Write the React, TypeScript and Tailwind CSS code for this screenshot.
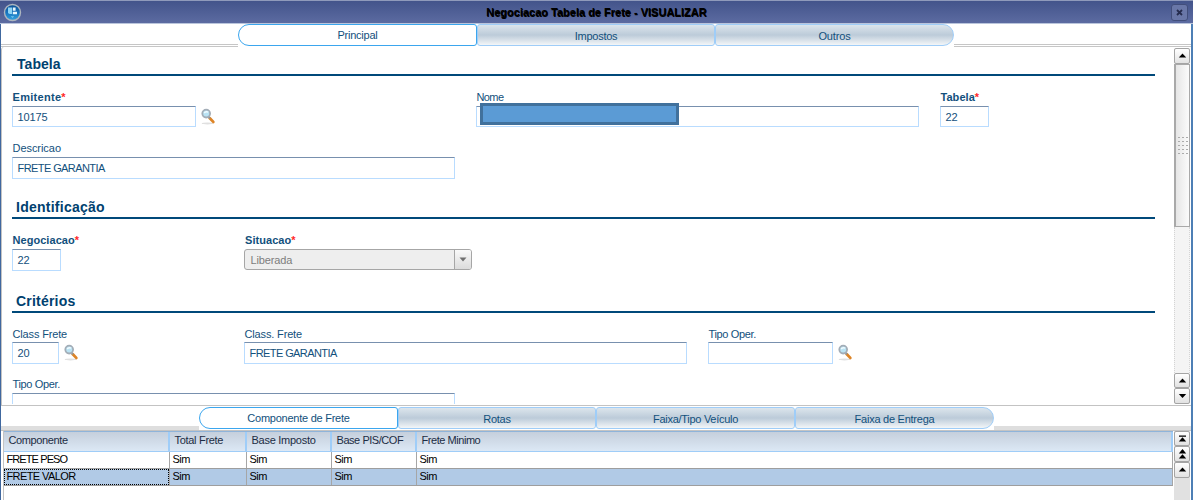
import React from "react";

type TextProps = { text: string; track?: string };

function Lens() {
  return (
    <svg width="16" height="18" viewBox="0 0 16 18" className="shrink-0">
      <ellipse cx="6.5" cy="15.4" rx="5.8" ry="1" fill="#e0e0e0" />
      <path d="M8.6 10 L12.3 13.9" stroke="#dd8426" strokeWidth="2.8" strokeLinecap="round" />
      <path d="M7.4 8.6 L9 10.3" stroke="#8d969e" strokeWidth="1.8" />
      <circle cx="5.2" cy="5.6" r="3.9" fill="#b9e2f3" stroke="#a3adb7" strokeWidth="1.8" />
      <path d="M3.2 5 Q4.7 2.8 7.2 4.2" stroke="#f2fbff" strokeWidth="1.4" fill="none" />
    </svg>
  );
}

function Field({
  label,
  bold,
  value,
  width,
  col,
  height = "h-[22px]",
  labelTrack = "tracking-normal",
  labelLine = "leading-[14px]",
  valueTrack = "tracking-[-0.1px]",
  lens,
}: {
  label: string;
  bold?: boolean;
  value?: string;
  width: string;
  col: string;
  height?: string;
  labelTrack?: string;
  labelLine?: string;
  valueTrack?: string;
  lens?: boolean;
}) {
  return (
    <div className={`${col} flex flex-col`}>
      <div className={`h-[16px] pl-[0.5px] whitespace-nowrap ${labelLine} ${labelTrack} ${bold ? "font-bold" : ""}`}>
        {label}
        {bold && <span className="text-[#ff2a2a]">*</span>}
      </div>
      <div className="flex">
        <div
          className={`${width} ${height} ${valueTrack} border border-[#b9dcff] border-t-[#7890ae] bg-white pl-[4.5px] leading-[20px] whitespace-nowrap`}
        >
          {value}
        </div>
        {lens && (
          <div className="ml-[5px] h-[20px] pt-[2px]">
            <Lens />
          </div>
        )}
      </div>
    </div>
  );
}

function Heading({ text, track, height, indent = "pl-[4px]" }: TextProps & { height: string; indent?: string }) {
  return (
    <div className={`${height} flex w-[1143px] items-end border-b-2 border-[#00497a]`}>
      <h2 className={`pb-[1px] ${indent} text-[14px] leading-[18px] font-bold text-[#00416f] ${track}`}>{text}</h2>
    </div>
  );
}

function Tab({
  text,
  track,
  width,
  active,
  last,
}: TextProps & { width: string; active?: boolean; last?: boolean }) {
  return (
    <div
      className={`${width} ${track} flex h-[22px] items-center justify-center border ${
        active
          ? "rounded-l-[11px] rounded-r-[3px] border-[#3ba6ee] bg-white"
          : `border-[#9fcdf8] bg-linear-to-b from-[#dce5ec] via-[#bccbd9] to-[#f3f6f8] ${
              last ? "rounded-l-[3px] rounded-r-[11px]" : "rounded-[3px]"
            }`
      }`}
    >
      <span className={active ? "pt-[1px]" : "pt-[3px]"}>{text}</span>
    </div>
  );
}

function ArrowButton({ kind, height }: { kind: "up" | "down" | "top" | "page"; height: string }) {
  return (
    <div
      className={`${height} flex w-[16px] shrink-0 items-center justify-center rounded-[2px] border border-[#a4a4a4] bg-linear-to-b from-white to-[#e2e2e2]`}
    >
      <svg width="9" height="10" viewBox="0 0 9 10" fill="#000">
        {kind === "up" && <path d="M4.5 2.5 L8.2 6.5 H0.8 Z" />}
        {kind === "down" && <path d="M4.5 7 L8.2 3 H0.8 Z" />}
        {kind === "top" && <path d="M1 1.5 H8 V2.7 H1 Z M4.5 3.3 L8.2 7.5 H0.8 Z" />}
        {kind === "page" && <path d="M4.5 0 L8.2 4.4 H0.8 Z M4.5 5.2 L8.2 9.6 H0.8 Z" />}
      </svg>
    </div>
  );
}

const columns = [
  { text: "Componente", track: "tracking-[-0.38px]", width: "w-[166px]" },
  { text: "Total Frete", track: "tracking-[-0.3px]", width: "w-[77px]" },
  { text: "Base Imposto", track: "tracking-[-0.27px]", width: "w-[85px]" },
  { text: "Base PIS/COF", track: "tracking-[-0.45px]", width: "w-[85px]" },
  { text: "Frete Minimo", track: "tracking-[-0.45px]", width: "flex-1" },
];

function Row({ name, track, selected }: { name: string; track: string; selected?: boolean }) {
  return (
    <div className={`flex h-[17px] leading-[15px] border-b border-[#9e9e9e] ${selected ? "bg-[#b1cae6]" : "bg-white"}`}>
      {columns.map((c, i) => (
        <div key={c.text} className={`${c.width} flex border-r border-[#a6a6a6]`}>
          {i === 0 ? (
            <div
              className={`flex-1 pl-[2.5px] whitespace-nowrap ${track} ${
                selected ? "outline-1 -outline-offset-1 outline-dotted outline-black" : ""
              }`}
            >
              {name}
            </div>
          ) : (
            <div className="pl-[2.5px] tracking-[-0.5px]">Sim</div>
          )}
        </div>
      ))}
    </div>
  );
}

export default function App() {
  return (
    <div className="flex h-[500px] w-[1193px] flex-col overflow-hidden bg-white font-['Liberation_Sans',Arial,sans-serif] text-[11px] text-[#12507c]">
      <header className="flex h-[24px] shrink-0 items-center border-t border-b border-t-[#8f9abb] border-b-[#bac5dc] bg-linear-to-b from-[#43548b] to-[#5c6ba1] pr-[5px] pl-[3px]">
        <svg width="19" height="19" viewBox="0 0 19 19">
          <defs>
            <linearGradient id="orb" x1="0" y1="0" x2="0" y2="1">
              <stop offset="0" stopColor="#0d4f93" />
              <stop offset="0.5" stopColor="#1673bd" />
              <stop offset="1" stopColor="#35a5e2" />
            </linearGradient>
          </defs>
          <circle cx="9.5" cy="9.5" r="8" fill="url(#orb)" stroke="#adb5bf" strokeWidth="1.4" />
          <path d="M5 4.6 H9 V11 H6.8 Q5 11 5 9.2 Z" fill="#8ed4f5" />
          <path d="M9.8 4.6 H12.6 V7.8 H9.8 Z M9.8 8.7 H14 V11.2 H9.8 Z" fill="#e5f6fd" />
          <path d="M7.8 13.2 H11.2 L9.5 15 Z" fill="#76c9ef" />
        </svg>
        <h1 className="flex-1 text-center text-[11px] leading-[20px] font-bold text-black [text-shadow:0.5px_0.5px_0_#000]">
          Negociacao Tabela de Frete - VISUALIZAR
        </h1>
        <div className="flex h-[17px] w-[17px] items-center justify-center rounded-[3px] border border-[#414e7b] bg-[#6977a8]">
          <svg width="7" height="7" viewBox="0 0 7 7">
            <path d="M1 1 L6 6 M6 1 L1 6" stroke="#252c4e" strokeWidth="1.8" />
          </svg>
        </div>
      </header>

      <div className="flex min-h-0 flex-1 flex-col border-r-2 border-l border-r-[#4d7fb5] border-l-[#40689f]">
        <nav className="flex h-[23px] shrink-0">
          <div className="h-[23px] flex-1 border-b border-[#c6c6c6]">
            <div className="h-[21px] border-b border-[#c6c6c6]" />
          </div>
          <Tab text="Principal" track="tracking-[-0.25px]" width="w-[239px]" active />
          <Tab text="Impostos" track="tracking-[-0.25px]" width="w-[238px]" />
          <Tab text="Outros" track="tracking-[-0.15px]" width="w-[239px]" last />
          <div className="h-[23px] flex-1 border-b border-[#c6c6c6]">
            <div className="h-[21px] border-b border-[#c6c6c6]" />
          </div>
        </nav>

        <section className="flex h-[359px] shrink-0 rounded-tl-[3px] border-b border-l border-[#c3c3c3]">
          <div className="h-[357px] min-w-0 flex-1 overflow-hidden pl-[10px]">
            <Heading text="Tabela" track="tracking-[0.05px]" height="h-[29px]" indent="pl-[5px]" />
            <div className="mt-[14px] grid grid-cols-[repeat(5,232px)]">
              <Field label="Emitente" bold value="10175" width="w-[184px]" col="col-start-1" height="h-[21px]" labelTrack="tracking-[0.3px]" lens />
              <div className="relative col-start-3 col-span-2">
                <Field label="Nome" width="w-[443px]" col="" height="h-[21px]" labelTrack="tracking-[-0.6px]" />
                <div className="absolute top-[13px] left-[4px] h-[22px] w-[199px] border-[3px] border-[#41719c] bg-[#5b9bd5]" />
              </div>
              <Field label="Tabela" bold value="22" width="w-[49px]" col="col-start-5" height="h-[21px]" labelTrack="tracking-[0.05px]" />
            </div>
            <div className="mt-[14px] grid grid-cols-[repeat(5,232px)]">
              <Field label="Descricao" value="FRETE GARANTIA" width="w-[443px]" col="col-span-2" labelTrack="tracking-[-0.05px]" valueTrack="tracking-[-0.58px]" />
            </div>

            <Heading text="Identificação" track="tracking-[0.25px]" height="h-[40px]" />
            <div className="mt-[14px] grid grid-cols-[repeat(5,232px)]">
              <Field label="Negociacao" bold value="22" width="w-[49px]" col="" labelTrack="tracking-[0.05px]" />
              <div>
                <div className="h-[16px] pl-[1px] leading-[14px] font-bold tracking-[0.05px]">
                  Situacao<span className="text-[#ff2a2a]">*</span>
                </div>
                <div className="flex h-[21px] w-[228px] rounded-[3px] border border-[#a6a6a6] bg-[#eeeeee] text-[#7d7d7d]">
                  <div className="flex-1 pl-[5.5px] leading-[20px] tracking-[-0.15px]">Liberada</div>
                  <div className="flex w-[17px] items-center justify-center rounded-r-[2px] border-l border-[#a6a6a6] bg-linear-to-b from-[#f9f9f9] to-[#dcdcdc]">
                    <svg width="8" height="5" viewBox="0 0 8 5">
                      <path d="M0.5 0.5 H7.5 L4 4.5 Z" fill="#707070" />
                    </svg>
                  </div>
                </div>
              </div>
            </div>

            <Heading text="Critérios" track="tracking-[0.2px]" height="h-[42px]" />
            <div className="mt-[13px] grid grid-cols-[repeat(5,232px)]">
              <Field label="Class Frete" value="20" width="w-[47px]" col="col-start-1" labelTrack="tracking-[-0.15px]" labelLine="leading-[16px]" lens />
              <Field label="Class. Frete" value="FRETE GARANTIA" width="w-[443px]" col="col-span-2" labelTrack="tracking-[-0.15px]" labelLine="leading-[16px]" valueTrack="tracking-[-0.58px]" />
              <Field label="Tipo Oper." width="w-[125px]" col="col-start-4" labelTrack="tracking-[-0.35px]" labelLine="leading-[16px]" lens />
            </div>
            <div className="mt-[13px] grid grid-cols-[repeat(5,232px)]">
              <Field label="Tipo Oper." width="w-[443px]" col="col-span-2" labelTrack="tracking-[-0.35px]" />
            </div>
          </div>

          <div className="mt-px mr-[1px] flex h-[356px] w-[16px] flex-col bg-[#f4f4f4]">
            <ArrowButton kind="up" height="h-[16px]" />
            <div className="flex h-[163px] flex-col items-center justify-center gap-[3px] border border-l-2 border-[#a9a9a9] bg-linear-to-r from-[#e6e6e6] to-[#fbfbfb]">
              {[0, 1, 2, 3, 4].map((r) => (
                <div key={r} className="flex gap-[2px]">
                  <i className="h-px w-[2px] bg-[#ababab]" />
                  <i className="h-px w-[2px] bg-[#ababab]" />
                  <i className="h-px w-[2px] bg-[#ababab]" />
                </div>
              ))}
            </div>
            <div className="flex-1 border-r border-l border-dotted border-[#d4d4d4]" />
            <ArrowButton kind="up" height="h-[15px]" />
            <ArrowButton kind="down" height="h-[16px]" />
          </div>
        </section>

        <nav className="flex h-[25px] shrink-0 items-stretch border-b border-[#c4c4c4] pt-px">
          <div className="flex w-[198px] items-end">
            <div className="h-[4px] w-full bg-[#dedede]" />
          </div>
          <Tab text="Componente de Frete" track="tracking-[-0.25px]" width="w-[199px]" active />
          <Tab text="Rotas" track="tracking-[-0.28px]" width="w-[198px]" />
          <Tab text="Faixa/Tipo Veículo" track="tracking-[-0.28px]" width="w-[199px]" />
          <Tab text="Faixa de Entrega" track="tracking-[-0.25px]" width="w-[199px]" last />
          <div className="flex flex-1 items-end">
            <div className="h-[4px] w-full bg-[#dedede]" />
          </div>
        </nav>

        <section className="flex min-h-0 flex-1 pl-[2px] text-black">
          <div className="min-w-0 flex-1 border-l border-[#c4c4c4]">
            <div className="flex h-[21px] border-t border-b border-t-[#8fb4da] border-b-[#9fcdf8] bg-linear-to-b from-[#c5cfdc] to-[#dce8f5] text-[#1c2c44]">
              {columns.map((c) => (
                <div key={c.text} className={`${c.width} ${c.track} border-r-2 border-[#9fcdf8] pl-[4.5px] leading-[16px] whitespace-nowrap`}>
                  {c.text}
                </div>
              ))}
            </div>
            <Row name="FRETE PESO" track="tracking-[-0.9px]" />
            <Row name="FRETE VALOR" track="tracking-[-0.6px]" selected />
          </div>
          <div className="mr-[1px] ml-px flex w-[16px] flex-col bg-[#e1e1e1]">
            <ArrowButton kind="top" height="h-[15px]" />
            <ArrowButton kind="page" height="h-[16px]" />
            <ArrowButton kind="up" height="h-[16px]" />
          </div>
        </section>
      </div>
    </div>
  );
}
